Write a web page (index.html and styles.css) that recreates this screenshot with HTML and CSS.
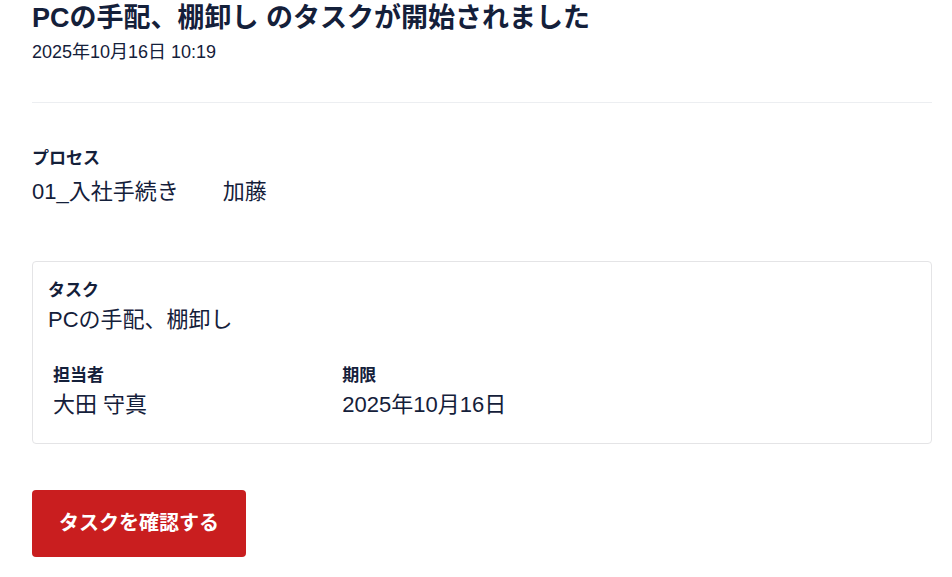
FILE: index.html
```html
<!DOCTYPE html>
<html lang="ja">
<head>
  <meta charset="UTF-8">
  <meta name="viewport" content="width=device-width, initial-scale=1.0">
  <title>タスク開始のお知らせ</title>
  <link rel="stylesheet" href="styles.css">
</head>
<body>
  <div class="mail">
    <div class="mail-head">
      <h1>PCの手配、棚卸し のタスクが開始されました</h1>
      <div class="sent-at">2025年10月16日 10:19</div>
    </div>

    <div class="process">
      <div class="label">プロセス</div>
      <div class="value">01_入社手続き　　加藤</div>
    </div>

    <div class="task-card">
      <div class="label">タスク</div>
      <div class="value">PCの手配、棚卸し</div>

      <div class="task-meta">
        <div class="meta-item">
          <div class="label">担当者</div>
          <div class="value">大田 守真</div>
        </div>
        <div class="meta-item">
          <div class="label">期限</div>
          <div class="value">2025年10月16日</div>
        </div>
      </div>
    </div>

    <a href="#" class="confirm-button">タスクを確認する</a>
  </div>
</body>
</html>
```

FILE: styles.css
```css
body {
  margin: 0;
  font-family: "Liberation Sans", "Noto Sans CJK JP", sans-serif;
  color: #14203a;
  background-color: white;
}

.mail {
  padding: 0 20px 0 32px;
}

.mail-head {
  padding-bottom: 37px;
  border-bottom: 1px solid #eceef1;
}

h1 {
  margin: 0;
  font-size: 27px;
  line-height: 36px;
  font-weight: bold;
}

.sent-at {
  margin-top: 4px;
  font-size: 18px;
  line-height: 25px;
}

.label {
  font-size: 17px;
  line-height: 24px;
  font-weight: bold;
}

.value {
  margin-top: 5px;
  font-size: 22px;
  line-height: 32px;
}

.process {
  margin-top: 44px;
}

.task-card {
  margin-top: 53px;
  padding: 17px 15px 22px;
  border: 1px solid #e4e4e6;
  border-radius: 4px;
}

.task-card .value {
  margin-top: 1px;
}

.task-meta {
  display: grid;
  grid-template-columns: repeat(3, 1fr);
  margin-top: 28px;
}

.meta-item {
  padding: 0 5px;
}

.confirm-button {
  display: inline-block;
  margin-top: 46px;
  padding: 20px 27px;
  font-size: 20px;
  line-height: 27px;
  font-weight: bold;
  color: white;
  background-color: #c91e1f;
  border-radius: 4px;
  text-decoration: none;
}
```
